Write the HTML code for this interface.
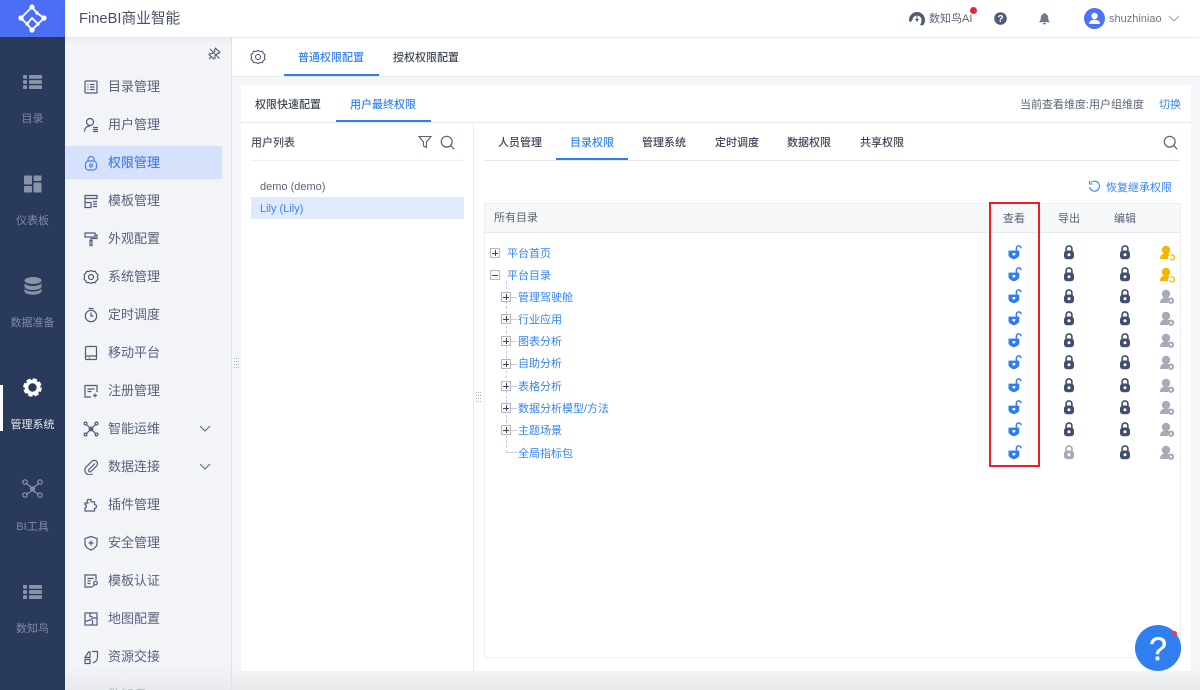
<!DOCTYPE html>
<html lang="zh"><head><meta charset="utf-8"><title>FineBI</title>
<style>
html,body{margin:0;padding:0}
body{width:1200px;height:690px;overflow:hidden;position:relative;background:#f5f6f9;font-family:"Liberation Sans","Noto Sans CJK SC",sans-serif;color:#4a5368}
div,span,svg{position:absolute;box-sizing:border-box}
.t{white-space:nowrap;line-height:16px}
.rail{left:0;top:0;width:65px;height:690px;background:#293a5b}
.rl{width:65px;left:0;text-align:center;font-size:11px;color:#7f8a9f;line-height:16px;white-space:nowrap}
.nav{left:65px;top:37px;width:167px;height:653px;background:#f2f4f8;border-right:1px solid #dfe2e8;overflow:hidden}
.ni{left:43px;font-size:13px;line-height:18px;color:#56617a;white-space:nowrap}
.nic{left:18px;width:16px;height:16px;fill:none;stroke:#4f5c79;stroke-width:1.2}
.tab{font-size:11px;line-height:16px;white-space:nowrap;color:#3f4757;font-weight:500}
.on{color:#3685f2}
.tree{font-size:11px;line-height:16px;color:#3685f2;white-space:nowrap}
.box{width:10px;height:10px;border:1px solid #b4b8c1;background:#f8f9fa}
.box:before{content:"";position:absolute;left:1px;top:3.5px;width:6px;height:1px;background:#3f4654}
.box.p:after{content:"";position:absolute;left:3.5px;top:1px;width:1px;height:6px;background:#3f4654}
.st{left:511px;width:6px;height:1px;border-top:1px dashed #c9ccd3}
.ic{width:14px;height:16px}
</style></head><body>
<svg width="0" height="0" style="left:0;top:0">
<defs>
<symbol id="open" viewBox="0 0 14 16"><path d="M8.400 6V3.200a2.300 2.300 0 0 1 4.600 0" fill="none" stroke="#2f7df0" stroke-width="1.500"/><path d="M.5 5.600h10.800v4.400c0 2-2.600 3.400-5.400 4.300C3.100 13.400.5 12 .5 10z" fill="#2f7df0"/><path d="M4.500 8h2.800v1.700L5.900 10.900 4.500 9.700z" fill="#fff"/></symbol>
<symbol id="lock" viewBox="0 0 14 16"><path d="M4.100 6V3.800a2.900 2.900 0 0 1 5.800 0V6" fill="none" stroke="#414e6d" stroke-width="1.600"/><rect x="2" y="5.500" width="10" height="8.800" rx="3" fill="#414e6d"/><circle cx="7" cy="9.700" r="1.500" fill="#fff"/></symbol>
<symbol id="lockg" viewBox="0 0 14 16"><path d="M4.100 6V3.800a2.900 2.900 0 0 1 5.800 0V6" fill="none" stroke="#a5abb9" stroke-width="1.600"/><rect x="2" y="5.500" width="10" height="8.800" rx="3" fill="#a5abb9"/><circle cx="7" cy="9.700" r="1.500" fill="#fff"/></symbol>
<symbol id="uy" viewBox="0 0 16 16"><circle cx="7" cy="5" r="4.200" fill="#f7b500"/><path d="M1 14c0-4 2.500-5.500 6-5.500 1.500 0 2.800.4 3.600 1.200-1.300.8-1.800 2.500-1.600 4.300z" fill="#f7b500"/><path d="M10.700 13.400a2.500 2.500 0 1 0 .9-3" fill="none" stroke="#f7b500" stroke-width="1.200"/></symbol>
<symbol id="ug" viewBox="0 0 16 16"><circle cx="7" cy="5" r="4.200" fill="#a5abb9"/><path d="M1 14c0-4 2.500-5.500 6-5.500 1.500 0 2.800.4 3.600 1.200-1.300.8-1.800 2.500-1.600 4.300z" fill="#a5abb9"/><circle cx="12" cy="11.700" r="3.200" fill="#a5abb9"/><circle cx="12" cy="11.700" r="1.100" fill="#fff"/></symbol>
<symbol id="list" viewBox="0 0 19 16"><g fill="#8a94a8"><rect x="0" y="1" width="4" height="3.800" rx="1"/><rect x="0" y="6.100" width="4" height="3.800" rx="1"/><rect x="0" y="11.200" width="4" height="3.800" rx="1"/><rect x="6" y="1" width="13" height="3.800" rx=".8"/><rect x="6" y="6.100" width="13" height="3.800" rx=".8"/><rect x="6" y="11.200" width="13" height="3.800" rx=".8"/></g></symbol>
</defs></svg>

<!-- left rail -->
<div class="rail"></div>
<div style="left:0;top:0;width:65px;height:37px;background:#4a6ff6"></div>
<svg style="left:18px;top:4px" width="30" height="29" viewBox="0 0 30 29" fill="none" stroke="#fff" stroke-width="1.900"><path d="M14 3 3 14l6 6 5-6 6 6-6 6-5-6"/><path d="M14 3l5 6 7 5-6 6"/><g fill="#fff" stroke="none"><circle cx="14" cy="3" r="2.600"/><circle cx="3" cy="14" r="2.600"/><circle cx="26" cy="14" r="2.600"/><circle cx="14" cy="26" r="2.600"/><circle cx="9" cy="20" r="1.700"/><circle cx="20" cy="20" r="1.700"/><circle cx="19" cy="9" r="1.700"/></g></svg>
<svg style="left:23px;top:74px" width="19" height="16"><use href="#list"/></svg>
<div class="rl" style="top:111px">目录</div>
<svg style="left:24px;top:175px" width="18" height="18" fill="#8a94a8"><rect x="0" y="0.500" width="8" height="9" rx="1"/><rect x="9.500" y="0.500" width="8" height="5.500" rx="1"/><rect x="0" y="11" width="8" height="6.500" rx="1"/><rect x="9.500" y="7.500" width="8" height="10" rx="1"/></svg>
<div class="rl" style="top:213px">仪表板</div>
<svg style="left:24px;top:277px" width="18" height="18" fill="#8a94a8"><ellipse cx="9" cy="3.500" rx="8.500" ry="3.500"/><path d="M.5 6c1 2 4.500 3 8.500 3s7.500-1 8.500-3v3.500C17 12 13 13 9 13S1 12 .5 9.500z"/><path d="M.5 11.500c1 2 4.500 3 8.500 3s7.500-1 8.500-3v3c-.5 2-4.500 3.200-8.500 3.200S1 16.500.5 14.500z"/></svg>
<div class="rl" style="top:315px">数据准备</div>
<div style="left:0;top:385px;width:3px;height:46px;background:#fff"></div>
<svg style="left:23px;top:378px" width="19" height="19" viewBox="0 0 19 19" fill="none" stroke="#fff"><circle cx="9.500" cy="9.500" r="6" stroke-width="3.600"/><circle cx="9.500" cy="9.500" r="8" stroke-width="2.600" stroke-dasharray="4.200 2.080"/></svg>
<div class="rl" style="top:417px;color:#e4e7ee">管理系统</div>
<svg style="left:22px;top:479px" width="21" height="19" fill="none" stroke="#8a94a8" stroke-width="1.200"><path d="M4 4c3 3 6 4 8 8 1 2 3 2 5 3M17 4c-3 3-6 4-8 8-1 2-3 2-5 3"/><circle cx="3" cy="3" r="2.200"/><circle cx="18" cy="3" r="2.200"/><circle cx="3" cy="16" r="2.200"/><circle cx="18" cy="16" r="2.200"/><circle cx="10.500" cy="10" r="2"/></svg>
<div class="rl" style="top:519px">BI工具</div>
<svg style="left:23px;top:584px" width="19" height="16"><use href="#list"/></svg>
<div class="rl" style="top:621px">数知鸟</div>

<!-- secondary nav -->
<div class="nav">
<svg style="left:142px;top:9px" width="15" height="15" viewBox="0 0 15 15" fill="none" stroke="#4f5c79" stroke-width="1.100"><path d="M8.500 2.200l4.300 4.300-1.300 1-.9-.3-2.700 2.700.3 2-1.200 1L2 8.700l1.100-1.200 2 .3 2.700-2.700-.3-1z"/><path d="M2 13l2.500-2.500M3 3l9.500 9.500"/></svg>
<div style="left:0;top:109px;width:157px;height:33px;background:#d6e2fb"></div>

<svg class="nic" style="top:42px" viewBox="0 0 16 16"><rect x="2" y="2" width="12" height="12" rx="1"/><path d="M4.500 5.500h1M7 5.500h4.500M4.500 8h1M7 8h4.500M4.500 10.500h1M7 10.500h4.500"/></svg>
<div class="ni" style="top:41px">目录管理</div>
<svg class="nic" style="top:80px" viewBox="0 0 16 16"><circle cx="7" cy="5" r="3.500"/><path d="M1.500 14.500c0-3 2-5.500 5.500-5.500M10 10.500h5M10 12.500h5M10 14.500h5"/></svg>
<div class="ni" style="top:79px">用户管理</div>
<svg class="nic" style="top:118px;stroke:#4f7df5" viewBox="0 0 16 16"><rect x="2.500" y="6" width="11" height="9" rx="3"/><path d="M5 6V4.500a3 3 0 0 1 6 0V6"/><circle cx="8" cy="10.500" r="1.500"/></svg>
<div class="ni" style="top:117px;color:#4f7df5;font-weight:500">权限管理</div>
<svg class="nic" style="top:156px" viewBox="0 0 16 16"><path d="M2 2.500h12v3H2zM2 5.500v9h6v-5H2M10 8.500h4M10 11h4M10 13.500h4"/></svg>
<div class="ni" style="top:155px">模板管理</div>
<svg class="nic" style="top:194px" viewBox="0 0 16 16"><path d="M2 2h10v4H2zM12 4h2v3.500H8v2M7 9.500h2v5H7z"/></svg>
<div class="ni" style="top:193px">外观配置</div>
<svg class="nic" style="top:232px" viewBox="0 0 16 16"><path d="M8 1.500l2 1 2.300-.2 1 2 1.700 1.500-.6 2.200.6 2.200-1.700 1.500-1 2-2.300-.2-2 1-2-1-2.300.2-1-2L1 10.200l.6-2.200L1 5.800l1.700-1.500 1-2 2.300.2z"/><circle cx="8" cy="8" r="2.500"/></svg>
<div class="ni" style="top:231px">系统管理</div>
<svg class="nic" style="top:270px" viewBox="0 0 16 16"><circle cx="8" cy="9" r="5.700"/><path d="M5.500 1.500h5M8 5.500V9h2.500"/></svg>
<div class="ni" style="top:269px">定时调度</div>
<svg class="nic" style="top:308px" viewBox="0 0 16 16"><rect x="2.500" y="1.500" width="11" height="13" rx="1"/><path d="M2.500 11h11M6 13h1"/></svg>
<div class="ni" style="top:307px">移动平台</div>
<svg class="nic" style="top:346px" viewBox="0 0 16 16"><path d="M8 14H2V2.500h12V9M4.500 6h7M4.500 8.500h4M12 10.500v4M10 12.500h4"/></svg>
<div class="ni" style="top:345px">注册管理</div>
<svg class="nic" style="top:384px" viewBox="0 0 16 16"><path d="M3.500 3.500l9 9M12.500 3.500l-9 9"/><circle cx="2.500" cy="2.500" r="1.400"/><circle cx="13.500" cy="2.500" r="1.400"/><circle cx="2.500" cy="13.500" r="1.400"/><circle cx="13.500" cy="13.500" r="1.400"/><circle cx="8" cy="8" r="1.800"/></svg>
<div class="ni" style="top:383px">智能运维</div>
<svg style="left:134px;top:388px" width="12" height="8" fill="none" stroke="#5a6580" stroke-width="1.100"><path d="M1 1l5 5 5-5"/></svg>
<svg class="nic" style="top:422px" viewBox="0 0 16 16"><path d="M12 4.500L6 10.500a1.400 1.400 0 0 0 2 2l5.500-5.500a3.300 3.300 0 0 0-4.700-4.700L2.800 8.300a4.700 4.700 0 0 0 6.700 6.500"/></svg>
<div class="ni" style="top:421px">数据连接</div>
<svg style="left:134px;top:426px" width="12" height="8" fill="none" stroke="#5a6580" stroke-width="1.100"><path d="M1 1l5 5 5-5"/></svg>
<svg class="nic" style="top:460px" viewBox="0 0 16 16"><path d="M5 2.500h3v2.300h3.500v2.700a2 2 0 0 1 0 4v2.500H2v-3a1.800 1.800 0 0 0 0-3.500V6h3.500a2 2 0 0 1-.5-3.500z"/></svg>
<div class="ni" style="top:459px">插件管理</div>
<svg class="nic" style="top:498px" viewBox="0 0 16 16"><path d="M8 1.500l6 2v5c0 3-3 5.500-6 6.500-3-1-6-3.500-6-6.500v-5zM5.500 8h5M8 5.500v5"/></svg>
<div class="ni" style="top:497px">安全管理</div>
<svg class="nic" style="top:536px" viewBox="0 0 16 16"><path d="M13 7V2H2v12h7M4.500 5.500h6M4.500 8h3M4.500 10.500h3"/><circle cx="12.500" cy="10" r="1.800"/><path d="M11.500 11.500 9.500 14"/></svg>
<div class="ni" style="top:535px">模板认证</div>
<svg class="nic" style="top:574px" viewBox="0 0 16 16"><rect x="2" y="2" width="12" height="12"/><path d="M2 10.500 7.500 9l2-2h4.500M7 2v3.500H9.500M9.500 9v5"/></svg>
<div class="ni" style="top:573px">地图配置</div>
<svg class="nic" style="top:612px" viewBox="0 0 16 16"><path d="M2 8.500 5.500 3H7v5.500zM9 2.500h5.500V8c0 3-2 5-4.500 6M2 10.500h5v4H2z"/></svg>
<div class="ni" style="top:611px">资源交接</div>
<div class="ni" style="top:649px">数知鸟</div>
</div>

<!-- top bar -->
<div style="left:65px;top:0;width:1135px;height:37px;background:#fff;box-shadow:0 1px 6px rgba(60,70,90,.10)"></div>
<div class="t" style="left:79px;top:10px;font-size:14.7px;line-height:18px;color:#485264">FineBI商业智能</div>
<svg style="left:909px;top:11px" width="16" height="15" viewBox="0 0 16 15" fill="#4f5a70"><path d="M0 9a8 8 0 0 1 16 0c0 2.500-1 4.500-2.500 5.500L11 14c1-1.500 1.500-3 1.500-5A4.500 4.500 0 0 0 8.500 4.500V9H7.500V4.500A4.500 4.500 0 0 0 3.500 9L1.500 11C.5 11 0 10 0 9z"/><path d="M6 8h4l-2 3z"/></svg>
<div class="t" style="left:929px;top:11px;font-size:11px;color:#5a6478">数知鸟AI</div>
<div style="left:970px;top:7px;width:7px;height:7px;border-radius:50%;background:#f2252e"></div>
<svg style="left:994px;top:12px" width="13" height="13" viewBox="0 0 13 13"><circle cx="6.500" cy="6.500" r="6.300" fill="#525d75"/><text x="6.500" y="10" text-anchor="middle" font-size="10" font-weight="700" font-family="Liberation Sans" fill="#fff">?</text></svg>
<svg style="left:1039px;top:13px" width="11" height="12" viewBox="0 0 11 12" fill="#6f788c"><path d="M5.500 0a1 1 0 0 1 1 1c2 .5 2.700 2 2.700 4 0 2 .8 3 1.800 4.200H0C1 8 1.800 7 1.800 5c0-2 .7-3.500 2.700-4a1 1 0 0 1 1-1zM4 10h3a1.500 1.500 0 0 1-3 0z"/></svg>
<svg style="left:1084px;top:8px" width="21" height="21" viewBox="0 0 21 21"><circle cx="10.500" cy="10.500" r="10.500" fill="#4a74f5"/><circle cx="10.500" cy="8" r="3.200" fill="#fff"/><path d="M5 16c0-3 2.500-4.300 5.500-4.300S16 13 16 16z" fill="#fff"/></svg>
<div class="t" style="left:1109px;top:11px;font-size:11px;color:#6f788a">shuzhiniao</div>
<svg style="left:1168px;top:15px" width="12" height="8" fill="none" stroke="#9aa1b0" stroke-width="1"><path d="M1 1l5 5 5-5"/></svg>

<!-- top tabs -->
<div style="left:232px;top:38px;width:968px;height:39px;background:#fff;border-bottom:1px solid #e6e8ee"></div>
<svg style="left:250px;top:49px" width="16" height="16" viewBox="0 0 16 16" fill="none" stroke="#4f5a70" stroke-width="1.100"><path d="M8 1.500l2 1 2.300-.2 1 2 1.700 1.500-.6 2.200.6 2.200-1.700 1.500-1 2-2.300-.2-2 1-2-1-2.300.2-1-2L1 10.200l.6-2.200L1 5.800l1.700-1.500 1-2 2.300.2z"/><circle cx="8" cy="8" r="2.500"/></svg>
<div class="tab on" style="left:298px;top:50px">普通权限配置</div>
<div style="left:284px;top:74px;width:95px;height:2px;background:#2f7df0"></div>
<div class="tab" style="left:393px;top:50px">授权权限配置</div>

<!-- main panel -->
<div style="left:241px;top:85px;width:950px;height:586px;background:#fff"></div>
<div style="left:241px;top:122px;width:950px;height:1px;background:#e8eaef"></div>
<div class="tab" style="left:255px;top:97px">权限快速配置</div>
<div class="tab on" style="left:350px;top:97px">用户最终权限</div>
<div style="left:336px;top:120px;width:95px;height:2px;background:#2f7df0"></div>
<div class="t" style="left:1020px;top:97px;font-size:11px;color:#5a6478">当前查看维度:用户组维度</div>
<div class="t on" style="left:1159px;top:97px;font-size:11px">切换</div>

<!-- user list -->
<div style="left:473px;top:123px;width:1px;height:548px;background:#e8eaef"></div>
<div class="tab" style="left:251px;top:135px;color:#4a5262">用户列表</div>
<svg style="left:418px;top:135px" width="14" height="14" fill="none" stroke="#565f73" stroke-width="1.100"><path d="M1 1.500h12L8.500 7v5.500l-3-1.500V7z"/></svg>
<svg style="left:440px;top:135px" width="15" height="15" fill="none" stroke="#565f73" stroke-width="1.200"><circle cx="6.700" cy="6.700" r="5.400"/><path d="M10.700 10.700l3.500 3.500"/></svg>
<div style="left:251px;top:160px;width:213px;height:1px;background:#eef0f3"></div>
<div class="t" style="left:260px;top:179px;font-size:11px;color:#5a6478">demo (demo)</div>
<div style="left:251px;top:197px;width:213px;height:22px;background:#dfeafd"></div>
<div class="t on" style="left:260px;top:201px;font-size:11px">Lily (Lily)</div>

<!-- drag handles -->
<svg style="left:234px;top:358px" width="5" height="12" fill="#a9aeb8"><g><rect x="0" y="0" width="1" height="1"/><rect x="2" y="0" width="1" height="1"/><rect x="4" y="0" width="1" height="1"/><rect x="0" y="3" width="1" height="1"/><rect x="2" y="3" width="1" height="1"/><rect x="4" y="3" width="1" height="1"/><rect x="0" y="6" width="1" height="1"/><rect x="2" y="6" width="1" height="1"/><rect x="4" y="6" width="1" height="1"/><rect x="0" y="9" width="1" height="1"/><rect x="2" y="9" width="1" height="1"/><rect x="4" y="9" width="1" height="1"/></g></svg>
<svg style="left:476px;top:392px" width="5" height="12" fill="#a9aeb8"><g><rect x="0" y="0" width="1" height="1"/><rect x="2" y="0" width="1" height="1"/><rect x="4" y="0" width="1" height="1"/><rect x="0" y="3" width="1" height="1"/><rect x="2" y="3" width="1" height="1"/><rect x="4" y="3" width="1" height="1"/><rect x="0" y="6" width="1" height="1"/><rect x="2" y="6" width="1" height="1"/><rect x="4" y="6" width="1" height="1"/><rect x="0" y="9" width="1" height="1"/><rect x="2" y="9" width="1" height="1"/><rect x="4" y="9" width="1" height="1"/></g></svg>

<!-- right tabs -->
<div style="left:484px;top:160px;width:697px;height:1px;background:#e8eaef"></div>
<div class="tab" style="left:498px;top:135px">人员管理</div>
<div class="tab on" style="left:570px;top:135px">目录权限</div>
<div style="left:556px;top:158px;width:72px;height:2px;background:#2f7df0"></div>
<div class="tab" style="left:642px;top:135px">管理系统</div>
<div class="tab" style="left:715px;top:135px">定时调度</div>
<div class="tab" style="left:787px;top:135px">数据权限</div>
<div class="tab" style="left:860px;top:135px">共享权限</div>
<svg style="left:1163px;top:135px" width="15" height="15" fill="none" stroke="#565f73" stroke-width="1.200"><circle cx="6.700" cy="6.700" r="5.400"/><path d="M10.700 10.700l3.500 3.500"/></svg>

<svg style="left:1088px;top:180px" width="13" height="13" fill="none" stroke="#3685f2" stroke-width="1.100"><path d="M3 2.500a5 5 0 1 1-1.500 4.500M1.500 1v3H4.500"/></svg>
<div class="t on" style="left:1106px;top:180px;font-size:11px">恢复继承权限</div>

<!-- table -->
<div style="left:484px;top:203px;width:697px;height:455px;border:1px solid #eceef2;background:#fff"></div>
<div style="left:485px;top:204px;width:695px;height:29px;background:#f7f8fa;border-bottom:1px solid #e8eaef"></div>
<div class="t" style="left:494px;top:210px;font-size:11px;color:#5a6272">所有目录</div>
<div class="t" style="left:1003px;top:211px;font-size:11px;color:#5a6272">查看</div>
<div class="t" style="left:1058px;top:211px;font-size:11px;color:#5a6272">导出</div>
<div class="t" style="left:1114px;top:211px;font-size:11px;color:#5a6272">编辑</div>
<div style="left:1039px;top:204px;width:1px;height:29px;background:#e8eaef"></div>

<!-- tree -->
<div style="left:506px;top:281px;height:172px;border-left:1px dashed #c9ccd3;width:1px"></div>
<div style="left:507px;top:452px;width:10px;border-top:1px dashed #c9ccd3;height:1px"></div>

<div class="box p" style="left:490px;top:248px"></div><div class="tree" style="left:507px;top:246px">平台首页</div>
<div class="box" style="left:490px;top:270px"></div><div class="tree" style="left:507px;top:268px">平台目录</div>
<div class="st" style="top:297px"></div><div class="box p" style="left:501px;top:292px"></div><div class="tree" style="left:518px;top:290px">管理驾驶舱</div>
<div class="st" style="top:319px"></div><div class="box p" style="left:501px;top:314px"></div><div class="tree" style="left:518px;top:312px">行业应用</div>
<div class="st" style="top:341px"></div><div class="box p" style="left:501px;top:336px"></div><div class="tree" style="left:518px;top:334px">图表分析</div>
<div class="st" style="top:364px"></div><div class="box p" style="left:501px;top:359px"></div><div class="tree" style="left:518px;top:356px">自助分析</div>
<div class="st" style="top:386px"></div><div class="box p" style="left:501px;top:381px"></div><div class="tree" style="left:518px;top:379px">表格分析</div>
<div class="st" style="top:408px"></div><div class="box p" style="left:501px;top:403px"></div><div class="tree" style="left:518px;top:401px">数据分析模型/方法</div>
<div class="st" style="top:430px"></div><div class="box p" style="left:501px;top:425px"></div><div class="tree" style="left:518px;top:423px">主题场景</div>
<div class="tree" style="left:518px;top:446px">全局指标包</div>

<!-- permission icons -->
<svg class="ic" style="left:1008px;top:245px"><use href="#open"/></svg><svg class="ic" style="left:1062px;top:245px"><use href="#lock"/></svg><svg class="ic" style="left:1118px;top:245px"><use href="#lock"/></svg><svg style="left:1159px;top:245px" width="16" height="16"><use href="#uy"/></svg>
<svg class="ic" style="left:1008px;top:267px"><use href="#open"/></svg><svg class="ic" style="left:1062px;top:267px"><use href="#lock"/></svg><svg class="ic" style="left:1118px;top:267px"><use href="#lock"/></svg><svg style="left:1159px;top:267px" width="16" height="16"><use href="#uy"/></svg>
<svg class="ic" style="left:1008px;top:289px"><use href="#open"/></svg><svg class="ic" style="left:1062px;top:289px"><use href="#lock"/></svg><svg class="ic" style="left:1118px;top:289px"><use href="#lock"/></svg><svg style="left:1159px;top:289px" width="16" height="16"><use href="#ug"/></svg>
<svg class="ic" style="left:1008px;top:311px"><use href="#open"/></svg><svg class="ic" style="left:1062px;top:311px"><use href="#lock"/></svg><svg class="ic" style="left:1118px;top:311px"><use href="#lock"/></svg><svg style="left:1159px;top:311px" width="16" height="16"><use href="#ug"/></svg>
<svg class="ic" style="left:1008px;top:333px"><use href="#open"/></svg><svg class="ic" style="left:1062px;top:333px"><use href="#lock"/></svg><svg class="ic" style="left:1118px;top:333px"><use href="#lock"/></svg><svg style="left:1159px;top:333px" width="16" height="16"><use href="#ug"/></svg>
<svg class="ic" style="left:1008px;top:355px"><use href="#open"/></svg><svg class="ic" style="left:1062px;top:355px"><use href="#lock"/></svg><svg class="ic" style="left:1118px;top:355px"><use href="#lock"/></svg><svg style="left:1159px;top:355px" width="16" height="16"><use href="#ug"/></svg>
<svg class="ic" style="left:1008px;top:378px"><use href="#open"/></svg><svg class="ic" style="left:1062px;top:378px"><use href="#lock"/></svg><svg class="ic" style="left:1118px;top:378px"><use href="#lock"/></svg><svg style="left:1159px;top:378px" width="16" height="16"><use href="#ug"/></svg>
<svg class="ic" style="left:1008px;top:400px"><use href="#open"/></svg><svg class="ic" style="left:1062px;top:400px"><use href="#lock"/></svg><svg class="ic" style="left:1118px;top:400px"><use href="#lock"/></svg><svg style="left:1159px;top:400px" width="16" height="16"><use href="#ug"/></svg>
<svg class="ic" style="left:1008px;top:422px"><use href="#open"/></svg><svg class="ic" style="left:1062px;top:422px"><use href="#lock"/></svg><svg class="ic" style="left:1118px;top:422px"><use href="#lock"/></svg><svg style="left:1159px;top:422px" width="16" height="16"><use href="#ug"/></svg>
<svg class="ic" style="left:1008px;top:445px"><use href="#open"/></svg><svg class="ic" style="left:1062px;top:445px"><use href="#lockg"/></svg><svg class="ic" style="left:1118px;top:445px"><use href="#lock"/></svg><svg style="left:1159px;top:445px" width="16" height="16"><use href="#ug"/></svg>

<!-- red box -->
<div style="left:989px;top:202px;width:51px;height:265px;border:2px solid #ee1c25"></div>

<!-- bottom strip -->
<div style="left:232px;top:671px;width:968px;height:19px;background:linear-gradient(#f3f4f6,#e8e9ea)"></div>
<div style="left:65px;top:665px;width:166px;height:25px;background:linear-gradient(rgba(228,230,233,0),rgba(228,230,233,.7))"></div>

<!-- help -->
<div style="left:1135px;top:625px;width:46px;height:46px;border-radius:50%;background:#2f7ff0"></div>
<div style="left:1135px;top:626px;width:46px;height:46px;line-height:46px;text-align:center;font-size:32px;font-weight:400;color:#fff;font-family:'Liberation Sans',sans-serif;-webkit-text-stroke:.5px #fff">?</div>
<div style="left:1172px;top:631px;width:5px;height:5px;border-radius:50%;background:#f0384a"></div>
</body></html>
